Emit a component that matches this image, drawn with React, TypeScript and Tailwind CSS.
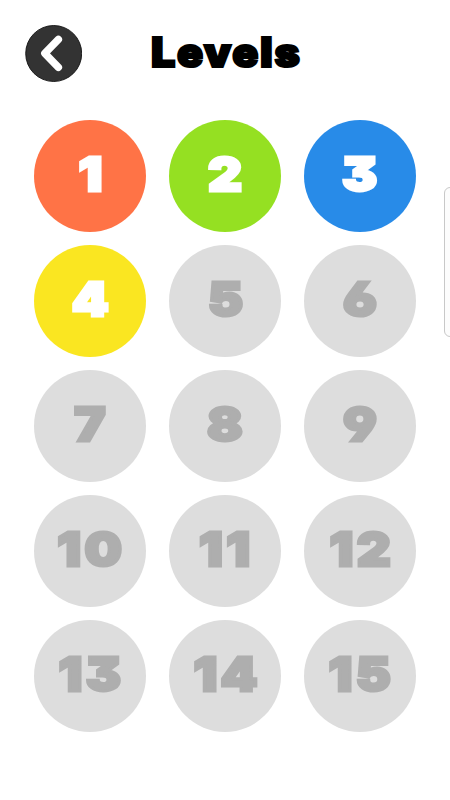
import React from "react";

const unlocked: Record<number, string> = {
  1: "bg-[#ff7346] text-white",
  2: "bg-[#95e022] text-white",
  3: "bg-[#288be8] text-white",
  4: "bg-[#fae621] text-white",
};

const levels = Array.from({ length: 15 }, (_, i) => i + 1);

export default function App() {
  return (
    <main className="relative h-[800px] w-[450px] overflow-hidden bg-white font-['Inter',sans-serif] font-black">
      <header className="flex h-[107px] pl-[25px] pt-[25px]">
        <button aria-label="Back" className="size-[57px] shrink-0">
          <svg viewBox="0 0 57 57" className="size-full">
            <circle cx="28.7" cy="28.5" r="28" fill="#333" stroke="#111" strokeWidth="0.9" />
            <path d="M33.4 14.3 L19.8 28.3 L33.4 42.3" fill="none" stroke="#fff" strokeWidth="7.4" strokeLinecap="round" strokeLinejoin="round" />
          </svg>
        </button>
        <h1 className="ml-[68.5px] h-[57px] origin-left scale-x-[1.05] text-[41px] leading-[55px] tracking-[1.6px] text-black [-webkit-text-stroke:2.2px_currentColor]">
          Levels
        </h1>
      </header>
      <section className="ml-[34px] mt-[13px] grid w-[382px] grid-cols-3 gap-x-[23px] gap-y-[13px]">
        {levels.map((n) => (
          <button
            key={n}
            className={`flex size-[112.4px] items-center justify-center rounded-full pb-[6px] -mb-[0.4px] ${
              unlocked[n] ?? "bg-[#ddd] text-[#aeaeae]"
            }`}
          >
            <span className="-mr-[3px] scale-x-[1.12] text-[47px] leading-none tracking-[3px] [-webkit-text-stroke:3px_currentColor] [font-feature-settings:'cv03','cv04','cv09'] [stroke-linejoin:round]">
              {n}
            </span>
          </button>
        ))}
      </section>
      <div className="absolute left-[444px] top-[187px] h-[150px] w-[16px] rounded-[6px] border border-[#c8c8c8] bg-[#fcfcfc]" />
    </main>
  );
}
